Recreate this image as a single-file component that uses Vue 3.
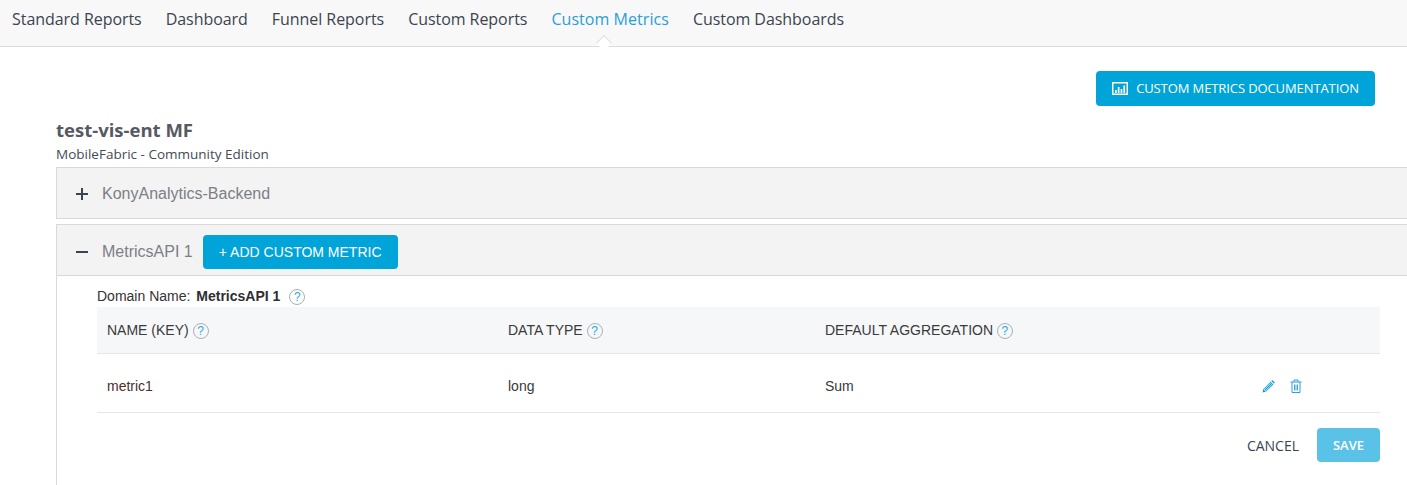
<script setup>
const tabs = ['Standard Reports','Dashboard','Funnel Reports','Custom Reports','Custom Metrics','Custom Dashboards']
const columns = [
  { label: 'NAME (KEY)', cls: 'c1' },
  { label: 'DATA TYPE', cls: 'c2' },
  { label: 'DEFAULT AGGREGATION', cls: 'c3' },
]
</script>

<template>
  <div class="page">
    <nav class="nav">
      <a v-for="t in tabs" :key="t" class="tab" :class="{ active: t === 'Custom Metrics' }">{{ t }}</a>
    </nav>
    <main class="main">
      <div class="doc-row">
        <button class="btn doc">
          <svg width="16" height="13" viewBox="0 0 16 13" class="doc-icon">
            <rect x="0.75" y="0.75" width="14.5" height="11.5" fill="none" stroke="#fff" stroke-width="1.5"/>
            <path d="M3 11V8h1.700v3zM5.800 11V5h1.700v6zM8.600 11V7h1.700v4zM11.400 11V3.500h1.700V11z" fill="#fff"/>
          </svg>
          CUSTOM METRICS DOCUMENTATION
        </button>
      </div>
      <h1 class="title">test-vis-ent MF</h1>
      <p class="sub">MobileFabric - Community Edition</p>

      <section class="panel first">
        <header class="panel-head">
          <svg class="sign" width="12" height="12" viewBox="0 0 12 12"><path d="M0 6h12M6 0v12" stroke="#3a4350" stroke-width="2"/></svg>
          <span class="panel-name">KonyAnalytics-Backend</span>
        </header>
      </section>

      <section class="panel second">
        <header class="panel-head">
          <svg class="sign" width="12" height="12" viewBox="0 0 12 12"><path d="M0 6h12" stroke="#3a4350" stroke-width="2"/></svg>
          <span class="panel-name">MetricsAPI 1</span>
          <button class="btn add">+ ADD CUSTOM METRIC</button>
        </header>
        <div class="panel-body">
          <div class="domain">Domain Name: <b>MetricsAPI 1</b>
            <span class="help domain-help">?</span>
          </div>
          <div class="table">
            <div class="row head">
              <div v-for="c in columns" :key="c.label" class="cell" :class="c.cls">{{ c.label }} <span class="help">?</span></div>
            </div>
            <div class="row body-row">
              <div class="cell c1 red">metric1</div>
              <div class="cell c2">long</div>
              <div class="cell c3">Sum</div>
              <div class="actions">
                <svg width="13" height="13" viewBox="0 0 13 13"><path d="M0.500 12.500l0.900-3.600 7.200-7.200 2.700 2.700-7.200 7.200zM1.800 9.600l1.600 1.600 6.600-6.600-1.600-1.600z" fill="#0f9bd7" fill-rule="evenodd"/><path d="M2.600 9.600l6-6 0.800 0.800-6 6z" fill="#0f9bd7"/><path d="M9.300 1l0.600-0.500q0.500-0.300 0.900 0l1.700 1.700q0.300 0.500 0 0.900L12 3.700z" fill="#0f9bd7"/></svg>
                <svg width="12" height="14" viewBox="0 0 12 14" fill="none" stroke="#2d9fdc"><path d="M0.500 3h11M4 3V1h4v2M2 3v10.500h8V3"/><path d="M4.500 5.500v6M6 5.500v6M7.500 5.500v6" stroke-width="0.900"/></svg>
              </div>
            </div>
          </div>
          <div class="footer">
            <a class="cancel">CANCEL</a>
            <button class="btn save">SAVE</button>
          </div>
        </div>
      </section>
    </main>
  </div>
</template>

<style>
html, body { margin: 0; overflow: hidden; background: #fff; }
</style>

<style scoped>
.page { width: 1407px; height: 485px; overflow: hidden; font-family: "Liberation Sans", Arial, sans-serif; color: #333; }
.nav { height: 46px; background: #f8f8f8; border-bottom: 1px solid #dcdcdc; display: flex; padding-left: 12px; gap: 24px; font-family: "Open Sans", sans-serif; font-size: 16px; letter-spacing: -0.05px; line-height: 39px; color: #3c4450; }
.tab { position: relative; white-space: nowrap; }
.tab.active { color: #2a9fd6; letter-spacing: 0.05px; }
.tab.active::after { content: ""; position: absolute; left: 47px; top: 37px; width: 11px; height: 11px; background: #fff; border-left: 1px solid #dcdcdc; border-top: 1px solid #dcdcdc; transform: rotate(45deg) scale(0.95); }
.main { padding-left: 56px; }
.doc-row { display: flex; justify-content: flex-end; padding: 24px 32px 0 0; }
.btn { border: 0; border-radius: 4px; background: #00a4d8; color: #fff; padding: 0; cursor: pointer; }
.doc { width: 279px; height: 35px; padding-bottom: 1px; display: flex; align-items: center; justify-content: center; gap: 8px; font-family: "Open Sans", sans-serif; font-size: 13px; letter-spacing: -0.1px; }
.doc-icon { flex: none; }
.title { margin: 13px 0 0; font-family: "Open Sans", sans-serif; font-size: 18.5px; line-height: 22px; font-weight: 700; color: #555a63; letter-spacing: 0; }
.sub { margin: 4px 0 0; font-family: "Open Sans", sans-serif; font-size: 13.5px; line-height: 18px; color: #444b55; height: 17px; }
.panel { width: 1400px; border: 1px solid #d9d9d9; }
.first { margin-top: 5px; height: 50px; }
.second { margin-top: 5px; border-bottom: 0; height: 300px; }
.panel-head { height: 50px; box-sizing: border-box; background: #f3f3f4; display: flex; align-items: center; padding-left: 19px; }
.first .panel-head { padding-top: 2px; }
.second .panel-head { height: 51px; padding-top: 4px; border-bottom: 1px solid #d9d9d9; }
.sign { flex: none; margin-right: 14px; }
.panel-name { font-size: 16px; color: #7c7f85; }
.add { margin-left: 10px; width: 195px; height: 34px; font-family: "Liberation Sans", sans-serif; font-size: 14px; }
.panel-body { padding: 12px 0 0 40px; width: 1283px; }
.domain { font-size: 14px; line-height: 16px; height: 19px; color: #333; }
.domain b { color: #2e2e33; margin-left: 2px; }
.help { display: inline-flex; align-items: center; justify-content: center; width: 14px; height: 14px; border: 1px solid #a9b0b6; border-radius: 50%; font-size: 12px; color: #2aa8e0; vertical-align: 0; }
.domain-help { margin-left: 9px; }
.table { width: 100%; }
.row { position: relative; display: flex; align-items: center; }
.head { height: 46px; background: #f6f7f9; border-bottom: 1px solid #e5e6e8; }
.body-row { box-sizing: border-box; padding-top: 6px; border-bottom: 1px solid #e5e6e8; height: 59px; }
.cell { font-size: 14px; color: #3a3a3a; white-space: nowrap; }
.c1 { width: 411px; padding-left: 10px; box-sizing: border-box; }
.c2 { width: 317px; }
.c3 { width: 400px; }
.red { color: #4b2e2e; }
.actions { margin-left: 37px; display: flex; align-items: center; gap: 15px; }
.footer { display: flex; justify-content: flex-end; align-items: center; margin-top: 15px; }
.cancel { font-family: "Open Sans", sans-serif; font-size: 14px; color: #3c4450; margin-right: 18px; }
.save { width: 63px; height: 34px; background: #5bc2e7; font-family: "Open Sans", sans-serif; font-size: 13px; font-weight: 600; }
</style>
